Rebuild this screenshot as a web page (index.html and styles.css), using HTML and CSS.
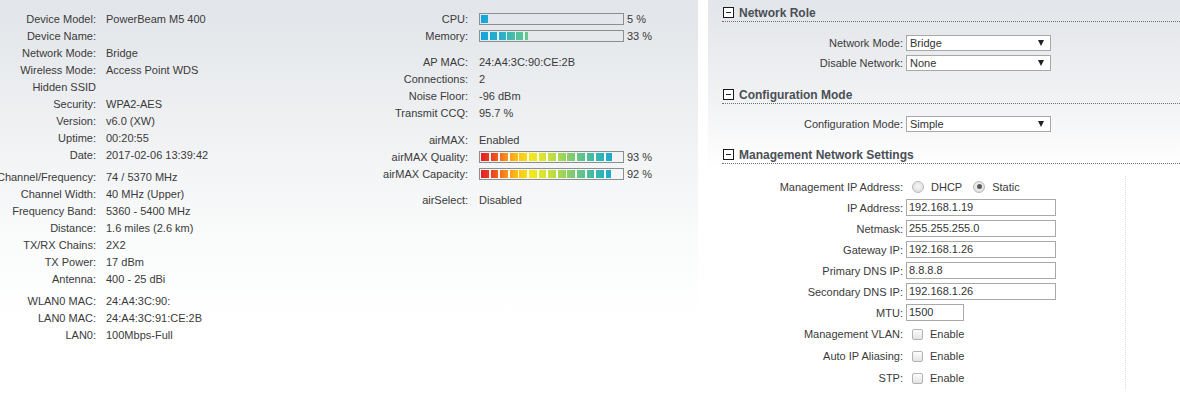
FILE: index.html
```html
<!DOCTYPE html>
<html lang="en">
<head>
<meta charset="utf-8">
<title>Status</title>
<link rel="stylesheet" href="styles.css">
</head>
<body>
<div class="page">
  <div class="status">
    <div class="col col-info">
      <div class="group">
        <div class="row"><span class="lbl">Device Model:</span><span class="val">PowerBeam M5 400</span></div>
        <div class="row"><span class="lbl">Device Name:</span><span class="val"></span></div>
        <div class="row"><span class="lbl">Network Mode:</span><span class="val">Bridge</span></div>
        <div class="row"><span class="lbl">Wireless Mode:</span><span class="val">Access Point WDS</span></div>
        <div class="row"><span class="lbl">Hidden SSID</span><span class="val"></span></div>
        <div class="row"><span class="lbl">Security:</span><span class="val">WPA2-AES</span></div>
        <div class="row"><span class="lbl">Version:</span><span class="val">v6.0 (XW)</span></div>
        <div class="row"><span class="lbl">Uptime:</span><span class="val">00:20:55</span></div>
        <div class="row"><span class="lbl">Date:</span><span class="val">2017-02-06 13:39:42</span></div>
      </div>
      <div class="group">
        <div class="row"><span class="lbl">Channel/Frequency:</span><span class="val">74 / 5370 MHz</span></div>
        <div class="row"><span class="lbl">Channel Width:</span><span class="val">40 MHz (Upper)</span></div>
        <div class="row"><span class="lbl">Frequency Band:</span><span class="val">5360 - 5400 MHz</span></div>
        <div class="row"><span class="lbl">Distance:</span><span class="val">1.6 miles (2.6 km)</span></div>
        <div class="row"><span class="lbl">TX/RX Chains:</span><span class="val">2X2</span></div>
        <div class="row"><span class="lbl">TX Power:</span><span class="val">17 dBm</span></div>
        <div class="row"><span class="lbl">Antenna:</span><span class="val">400 - 25 dBi</span></div>
      </div>
      <div class="group">
        <div class="row"><span class="lbl">WLAN0 MAC:</span><span class="val">24:A4:3C:90:</span></div>
        <div class="row"><span class="lbl">LAN0 MAC:</span><span class="val">24:A4:3C:91:CE:2B</span></div>
        <div class="row"><span class="lbl">LAN0:</span><span class="val">100Mbps-Full</span></div>
      </div>
    </div>
    <div class="col col-stats">
      <div class="group">
        <div class="row"><span class="lbl">CPU:</span><span class="val"><span class="bar"><span class="fill fill-load" style="width:5%"></span></span><span class="pct">5 %</span></span></div>
        <div class="row"><span class="lbl">Memory:</span><span class="val"><span class="bar"><span class="fill fill-load" style="width:33%"></span></span><span class="pct">33 %</span></span></div>
      </div>
      <div class="group">
        <div class="row"><span class="lbl">AP MAC:</span><span class="val">24:A4:3C:90:CE:2B</span></div>
        <div class="row"><span class="lbl">Connections:</span><span class="val">2</span></div>
        <div class="row"><span class="lbl">Noise Floor:</span><span class="val">-96 dBm</span></div>
        <div class="row"><span class="lbl">Transmit CCQ:</span><span class="val">95.7 %</span></div>
      </div>
      <div class="group">
        <div class="row"><span class="lbl">airMAX:</span><span class="val">Enabled</span></div>
        <div class="row"><span class="lbl">airMAX Quality:</span><span class="val"><span class="bar"><span class="fill fill-quality" style="width:93%"></span></span><span class="pct">93 %</span></span></div>
        <div class="row"><span class="lbl">airMAX Capacity:</span><span class="val"><span class="bar"><span class="fill fill-quality" style="width:92%"></span></span><span class="pct">92 %</span></span></div>
      </div>
      <div class="group">
        <div class="row"><span class="lbl">airSelect:</span><span class="val">Disabled</span></div>
      </div>
    </div>
  </div>

  <div class="config">
    <section class="sec">
      <h2 class="sec-head"><span class="toggle"></span>Network Role</h2>
      <div class="form form-role">
        <div class="frow frow-sel"><span class="flbl">Network Mode:</span><span class="select">Bridge<span class="arrow"></span></span></div>
        <div class="frow frow-sel"><span class="flbl">Disable Network:</span><span class="select">None<span class="arrow"></span></span></div>
      </div>
    </section>
    <section class="sec">
      <h2 class="sec-head"><span class="toggle"></span>Configuration Mode</h2>
      <div class="form form-mode">
        <div class="frow frow-sel"><span class="flbl">Configuration Mode:</span><span class="select">Simple<span class="arrow"></span></span></div>
      </div>
    </section>
    <section class="sec">
      <h2 class="sec-head"><span class="toggle"></span>Management Network Settings</h2>
      <div class="form form-mgmt">
        <div class="frow"><span class="flbl">Management IP Address:</span><span class="radio"></span><span class="opt">DHCP</span><span class="radio radio-on"></span><span class="opt">Static</span></div>
        <div class="frow"><span class="flbl">IP Address:</span><span class="input">192.168.1.19</span></div>
        <div class="frow"><span class="flbl">Netmask:</span><span class="input">255.255.255.0</span></div>
        <div class="frow"><span class="flbl">Gateway IP:</span><span class="input">192.168.1.26</span></div>
        <div class="frow"><span class="flbl">Primary DNS IP:</span><span class="input">8.8.8.8</span></div>
        <div class="frow"><span class="flbl">Secondary DNS IP:</span><span class="input">192.168.1.26</span></div>
        <div class="frow"><span class="flbl">MTU:</span><span class="input input-short">1500</span></div>
        <div class="frow frow-chk"><span class="flbl">Management VLAN:</span><span class="check"></span><span class="opt">Enable</span></div>
        <div class="frow frow-chk"><span class="flbl">Auto IP Aliasing:</span><span class="check"></span><span class="opt">Enable</span></div>
        <div class="frow frow-chk"><span class="flbl">STP:</span><span class="check"></span><span class="opt">Enable</span></div>
      </div>
    </section>
  </div>
</div>
</body>
</html>
```

FILE: styles.css
```css
html, body {
  margin: 0;
  padding: 0;
  background: #fff;
}

body {
  font-family: "Liberation Sans", Arial, sans-serif;
  font-size: 11px;
  color: #3a3a3a;
  width: 1180px;
  height: 411px;
  overflow: hidden;
}

.page {
  display: flex;
  gap: 10px;
  height: 411px;
}

/* ---------- left status panel ---------- */
.status {
  width: 698px;
  flex: none;
  box-sizing: border-box;
  padding-top: 10px;
  display: flex;
  background: linear-gradient(#e2e5e9 0, #eef0f2 120px, #fafbfb 240px, #fff 320px);
}

.col-info {
  width: 370px;
  flex: none;
}

.col-stats {
  flex: 1;
}

.row {
  display: flex;
  align-items: center;
  height: 17px;
  white-space: nowrap;
}

.lbl {
  flex: none;
  display: flex;
  justify-content: flex-end;
  white-space: nowrap;
}

.col-info .lbl {
  width: 96px;
}

.col-info .val {
  margin-left: 10px;
}

.col-info .group + .group {
  margin-top: 5px;
}

.col-stats .lbl {
  width: 98px;
}

.col-stats .val {
  margin-left: 11px;
  display: flex;
  align-items: center;
}

.col-stats .group + .group {
  margin-top: 9.5px;
}

.bar {
  display: block;
  width: 145px;
  height: 12px;
  box-sizing: border-box;
  border: 1px solid #8e8e8e;
  padding: 1px;
}

.fill {
  display: block;
  height: 8px;
  background-size: auto, 141px 8px;
  background-repeat: repeat, no-repeat;
}

.fill-load {
  background-image:
    repeating-linear-gradient(90deg, transparent 0 7.2px, rgba(250, 251, 252, 0.9) 7.2px 8.8px),
    linear-gradient(90deg, #13a4e0 0%, #2bb1c6 15%, #4dc1a2 25%, #6fcb83 35%, #a5d65a 50%, #e6e828 62%, #f7c614 72%, #f58a1f 84%, #e8262b 100%);
}

.fill-quality {
  background-image:
    repeating-linear-gradient(90deg, transparent 0 7.8px, rgba(255, 255, 255, 0.95) 7.8px 9.6px),
    linear-gradient(90deg, #e51f25 0%, #f0481f 9%, #f7901d 18%, #fbc70f 27%, #f4e81a 36%, #d7e42f 45%, #b0da4c 54%, #86cd6a 63%, #5cc38d 72%, #3cb9a8 81%, #22acc8 90%, #16a4e0 100%);
}

.pct {
  margin-left: 3px;
}

/* ---------- right config panel ---------- */
.config {
  flex: 1;
  background: linear-gradient(#e2e5e9 0, #f1f2f4 100px, #fff 170px);
}

.sec-head {
  margin: 0 0 0 14px;
  height: 22px;
  box-sizing: border-box;
  padding-top: 4px;
  border-bottom: 1px dotted #6f6f6f;
  display: flex;
  align-items: center;
  font-size: 12px;
  font-weight: bold;
  color: #4a4f56;
}

.toggle {
  position: relative;
  width: 11px;
  height: 11px;
  box-sizing: border-box;
  border: 1px solid #1a1a1a;
  background: #fff;
  margin: 0 5px 0 1px;
  flex: none;
}

.toggle::after {
  content: "";
  position: absolute;
  left: 2px;
  top: 3.5px;
  width: 5px;
  height: 1.5px;
  background: #222;
}

.form-role {
  padding: 13px 0 11px;
}

.form-mode {
  padding: 12px 0 10px;
}

.form-mgmt {
  margin-top: 12px;
  width: 418px;
  box-sizing: border-box;
  border-right: 1px dotted #dcdcdc;
}

.frow {
  display: flex;
  align-items: center;
  height: 21px;
  white-space: nowrap;
}

.frow-sel {
  height: 16px;
}

.frow-sel + .frow-sel {
  margin-top: 4px;
}

.frow-chk {
  height: 22px;
}

.flbl {
  width: 195px;
  flex: none;
  text-align: right;
  margin-right: 3px;
}

.select {
  position: relative;
  width: 145px;
  height: 16px;
  box-sizing: border-box;
  border: 1px solid #a8a8a8;
  background: #fff;
  padding-left: 3px;
  line-height: 14px;
  color: #333;
}

.arrow {
  position: absolute;
  right: 6px;
  top: 4px;
  width: 0;
  height: 0;
  border-left: 3.5px solid transparent;
  border-right: 3.5px solid transparent;
  border-top: 6px solid #222;
}

.input {
  width: 150px;
  height: 17px;
  box-sizing: border-box;
  border: 1px solid #a9a9a9;
  background: #fff;
  padding-left: 2px;
  line-height: 15px;
  color: #333;
}

.input-short {
  width: 58px;
}

.radio {
  position: relative;
  width: 12px;
  height: 12px;
  box-sizing: border-box;
  border-radius: 50%;
  border: 1px solid #b9b9b9;
  background: radial-gradient(circle at 50% 40%, #f6f6f6, #d9d9d9);
  margin-left: 6px;
  flex: none;
}

.radio + .opt {
  margin-left: 7px;
}

.opt + .radio {
  margin-left: 11px;
}

.radio-on::after {
  content: "";
  position: absolute;
  left: 2.5px;
  top: 2.5px;
  width: 5px;
  height: 5px;
  border-radius: 50%;
  background: #5a5a5a;
}

.check {
  width: 11px;
  height: 11px;
  box-sizing: border-box;
  border: 1px solid #b3b3b3;
  border-radius: 2px;
  background: linear-gradient(#fdfdfd, #e3e3e3);
  margin-left: 6px;
  flex: none;
}

.check + .opt {
  margin-left: 7px;
}
```
